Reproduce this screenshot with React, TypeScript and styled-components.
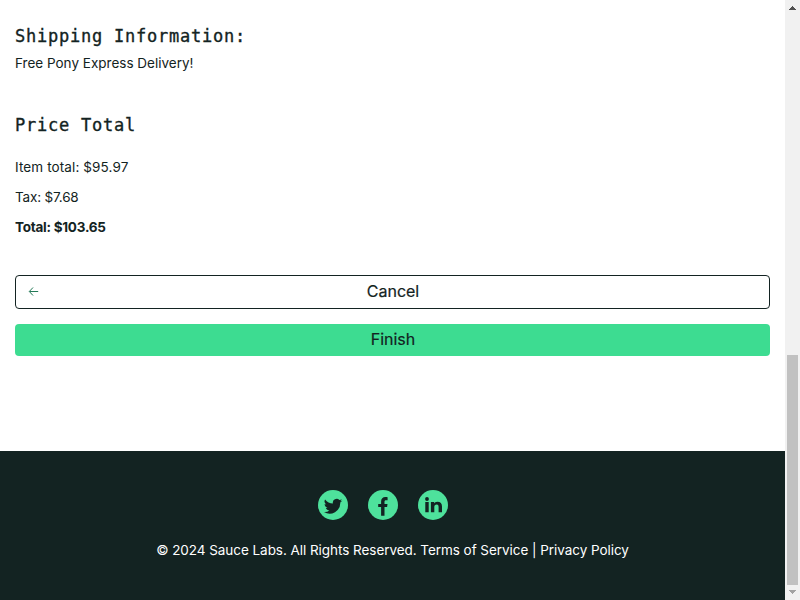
import React from "react";
import styled, { createGlobalStyle } from "styled-components";

const GlobalStyle = createGlobalStyle`
  * { box-sizing: border-box; }
  body { margin: 0; background: #fff; color: #132322; font-family: Inter, "Liberation Sans", sans-serif; overflow: hidden; }
`;

const Screen = styled.div`
  display: flex;
  width: 800px;
  height: 600px;
`;

const Page = styled.div`
  display: flex;
  flex-direction: column;
  width: 785px;
`;

const Summary = styled.main`
  display: flex;
  flex-direction: column;
  height: 451px;
  padding: 21px 15px 0;
`;

const Heading = styled.h2`
  margin: 0;
  height: 30px;
  font: 400 17px/30px "DejaVu Sans Mono", monospace;
  letter-spacing: 0.76px;
  -webkit-text-stroke: 0.35px #132322;
`;

const Line = styled.div<{ $bold?: boolean; $gap?: number; $spacing?: number }>`
  height: 20px;
  margin-top: ${(p) => p.$gap ?? 10}px;
  font-size: 13.5px;
  line-height: 20px;
  font-weight: ${(p) => (p.$bold ? 700 : 400)};
  letter-spacing: ${(p) => p.$spacing ?? 0}px;
  white-space: nowrap;
`;

const Block = styled.section<{ $gap?: number }>`
  margin-top: ${(p) => p.$gap ?? 0}px;
`;

const Actions = styled.div`
  display: flex;
  flex-direction: column;
  gap: 15px;
  margin-top: 38px;
`;

const Button = styled.button<{ $primary?: boolean }>`
  display: grid;
  grid-template-columns: 24px 1fr 24px;
  align-items: center;
  height: ${(p) => (p.$primary ? 32 : 34)}px;
  padding: 0 11px 2px 12px;
  border: ${(p) => (p.$primary ? "0" : "1px solid #132322")};
  border-radius: 4px;
  background: ${(p) => (p.$primary ? "#3ddc91" : "#fff")};
  color: #132322;
  font: 400 16px/20px Inter, sans-serif;
  letter-spacing: -0.02px;
  -webkit-text-stroke: 0.2px #132322;
`;

const Label = styled.span`
  grid-column: 2;
  text-align: center;
`;

const Footer = styled.footer`
  display: flex;
  flex-direction: column;
  align-items: center;
  height: 149px;
  padding-top: 39px;
  background: #132322;
  color: #fff;
`;

const Social = styled.div`
  display: flex;
  gap: 20px;
  margin-right: 19px;
  height: 30px;
`;

const Copy = styled.div`
  margin-top: 20px;
  font-size: 13.5px;
  line-height: 20px;
  letter-spacing: -0.05px;
  white-space: nowrap;
`;

const Scrollbar = styled.div`
  display: flex;
  flex-direction: column;
  align-items: center;
  width: 15px;
  height: 600px;
  background: #f1f1f1;
`;

const Track = styled.div`
  flex: 1;
  padding-top: 340px;
`;

const Thumb = styled.div`
  width: 11px;
  height: 230px;
  background: #c1c1c1;
`;

const Badge = ({ d }: { d: string }) => (
  <svg width="30" height="30" viewBox="0 0 30 30">
    <circle cx="15" cy="15" r="15" fill="#4ee19c" />
    <path d={d} fill="#132322" />
  </svg>
);

const bird =
  "M24.4 10.600c-.7.3-1.4.5-2.200.6.8-.5 1.300-1.200 1.600-2-.7.4-1.500.7-2.400.9a3.800 3.800 0 0 0-6.500 3.400 10.700 10.700 0 0 1-7.800-4 3.800 3.800 0 0 0 1.200 5c-.6 0-1.200-.2-1.700-.5 0 1.900 1.300 3.400 3 3.800-.6.1-1.100.2-1.700.1.500 1.500 1.900 2.600 3.500 2.600A7.600 7.600 0 0 1 6 22a10.700 10.700 0 0 0 16.300-9.500c.8-.5 1.500-1.200 2.100-1.900z";
const letterF =
  "M13.100 25.800v-8.700H10.200v-3.200h2.900v-2.300c0-2.900 1.700-4.500 4.200-4.500 1.100 0 1.900.1 2.300.1v3h-1.500c-1.300 0-1.600.6-1.600 1.500v2.200h3l-.4 3.200h-2.600v8.700z";
const letterIn =
  "M7.300 12h3.400v10.200H7.300zM9 7.100a1.900 1.900 0 1 1 0 3.800 1.900 1.900 0 0 1 0-3.800zM12.900 12h3.200v1.400c.5-.9 1.600-1.700 3.200-1.700 3.300 0 4.700 2 4.700 4.800v5.700h-3.400v-5.100c0-1.300-.3-2.700-1.900-2.700s-2.400 1.200-2.400 2.600v5.200h-3.400z";

const Arrow = () => (
  <svg width="12" height="12" viewBox="0 0 12 12" fill="none" stroke="#247a58" strokeWidth="1">
    <path d="M10.200 6.500H1.500M5 2.500L1.300 6.500l3.700 4" />
  </svg>
);

const ScrollArrow = ({ down = false }: { down?: boolean }) => (
  <svg width="15" height="15" viewBox="0 0 15 15" shapeRendering="crispEdges">
    {down ? <path d="M4 5h7L7.500 9z" fill="#a3a3a3" /> : <path d="M4 10h7L7.500 6z" fill="#505050" />}
  </svg>
);

export default function App() {
  return (
    <>
      <GlobalStyle />
      <Screen>
        <Page>
          <Summary>
            <Block>
              <Heading>Shipping Information:</Heading>
              <Line $gap={2}>Free Pony Express Delivery!</Line>
            </Block>
            <Block $gap={37}>
              <Heading>Price Total</Heading>
              <Line $gap={17} $spacing={0.11}>Item total: $95.97</Line>
              <Line $spacing={-0.17}>Tax: $7.68</Line>
              <Line $bold $spacing={-0.25}>Total: $103.65</Line>
            </Block>
            <Actions>
              <Button><Arrow /><Label>Cancel</Label></Button>
              <Button $primary><Label>Finish</Label></Button>
            </Actions>
          </Summary>
          <Footer>
            <Social>
              <Badge d={bird} />
              <Badge d={letterF} />
              <Badge d={letterIn} />
            </Social>
            <Copy>© 2024 Sauce Labs. All Rights Reserved. Terms of Service | Privacy Policy</Copy>
          </Footer>
        </Page>
        <Scrollbar>
          <ScrollArrow />
          <Track><Thumb /></Track>
          <ScrollArrow down />
        </Scrollbar>
      </Screen>
    </>
  );
}
